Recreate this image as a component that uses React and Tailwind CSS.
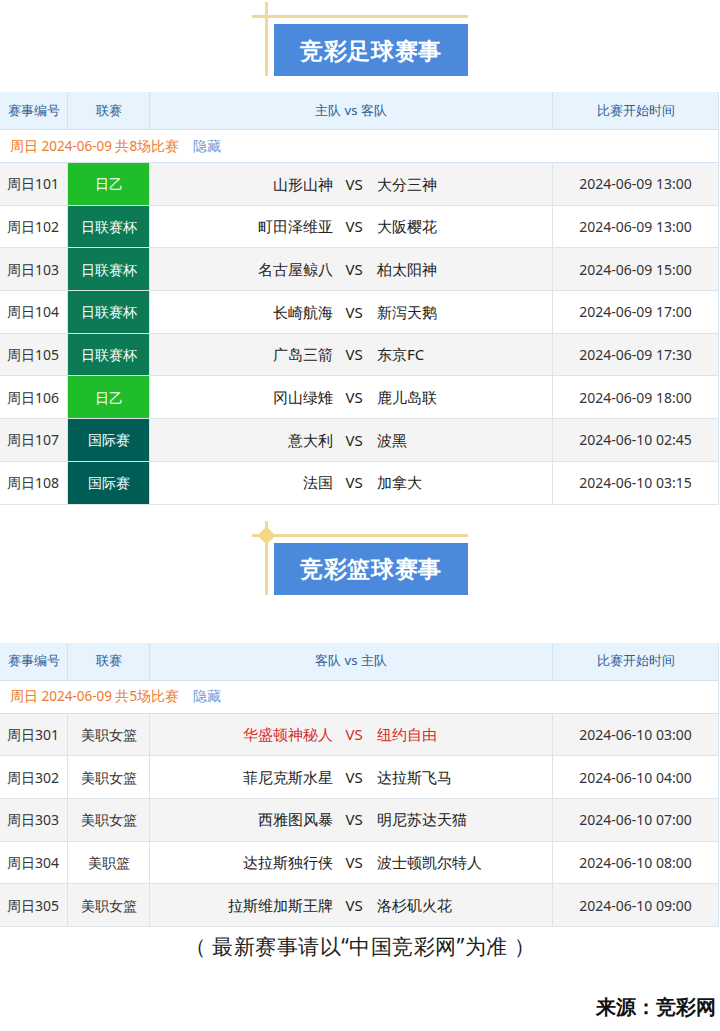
const football = [
  ['周日101', '日乙', 'bg-[#20bd2a]', '山形山神', '大分三神', '2024-06-09 13:00'],
  ['周日102', '日联赛杯', 'bg-[#0b7a55]', '町田泽维亚', '大阪樱花', '2024-06-09 13:00'],
  ['周日103', '日联赛杯', 'bg-[#0b7a55]', '名古屋鲸八', '柏太阳神', '2024-06-09 15:00'],
  ['周日104', '日联赛杯', 'bg-[#0b7a55]', '长崎航海', '新泻天鹅', '2024-06-09 17:00'],
  ['周日105', '日联赛杯', 'bg-[#0b7a55]', '广岛三箭', '东京FC', '2024-06-09 17:30'],
  ['周日106', '日乙', 'bg-[#20bd2a]', '冈山绿雉', '鹿儿岛联', '2024-06-09 18:00'],
  ['周日107', '国际赛', 'bg-[#005d55]', '意大利', '波黑', '2024-06-10 02:45'],
  ['周日108', '国际赛', 'bg-[#005d55]', '法国', '加拿大', '2024-06-10 03:15'],
];

const basketball = [
  ['周日301', '美职女篮', '', '华盛顿神秘人', '纽约自由', '2024-06-10 03:00', true],
  ['周日302', '美职女篮', '', '菲尼克斯水星', '达拉斯飞马', '2024-06-10 04:00'],
  ['周日303', '美职女篮', '', '西雅图风暴', '明尼苏达天猫', '2024-06-10 07:00'],
  ['周日304', '美职篮', '', '达拉斯独行侠', '波士顿凯尔特人', '2024-06-10 08:00'],
  ['周日305', '美职女篮', '', '拉斯维加斯王牌', '洛杉矶火花', '2024-06-10 09:00'],
];

const cols = 'grid grid-cols-[68px_82px_403px_165px]';

function Title({ text, dot }) {
  return (
    <div className="relative h-[76px] w-[216px] ml-[252px]">
      <div className="absolute left-0 right-0 top-[15px] h-[3px] bg-[#f0d898]" />
      <div className="absolute left-[13px] top-[2px] bottom-0 w-[3px] bg-[#f0d898]" />
      {dot && <div className="absolute left-[8px] top-[10px] w-[13px] h-[13px] rotate-45 rounded-[3px] bg-[#f5d68a]" />}
      <div className="absolute left-[22px] right-0 top-[24px] bottom-0 bg-[#4a89dc] flex items-center justify-center text-white text-[23px] font-bold tracking-wide">
        {text}
      </div>
    </div>
  );
}

function Table({ title, rows, count }) {
  return (
    <div className="w-[719px] border-r border-[#d8e4ee]">
      <div className={`${cols} h-[38px] bg-[#e8f4fd] text-[13px] text-[#2d5d93] border-b border-[#d3e2ee]`}>
        <div className="flex items-center justify-center border-r border-[#d3e2ee]">赛事编号</div>
        <div className="flex items-center justify-center border-r border-[#d3e2ee]">联赛</div>
        <div className="flex items-center justify-center border-r border-[#d3e2ee]">{title}</div>
        <div className="flex items-center justify-center">比赛开始时间</div>
      </div>
      <div className="h-[33px] flex items-center px-[10px] text-[13.5px] border-b border-[#d3e2ee]">
        <span className="text-[#f07a2c]">周日 2024-06-09 共{count}场比赛</span>
        <span className="ml-[14px] text-[#6d9ad6]">隐藏</span>
      </div>
      {rows.map((r, i) => (
        <div key={r[0]} className={`${cols} h-[42.7px] text-[14px] text-[#333] border-b border-[#dde3e8] ${i % 2 === 0 ? 'bg-[#f4f4f4]' : 'bg-white'}`}>
          <div className="flex items-center pl-[7px] border-r border-[#dde3e8]">{r[0]}</div>
          <div className={`flex items-center justify-center border-r border-[#dde3e8] ${r[2] ? r[2] + ' text-white' : ''}`}>{r[1]}</div>
          <div className={`flex items-center border-r border-[#dde3e8] text-[15px] ${r[6] ? 'text-[#d62b2b]' : 'text-[#222]'}`}>
            <span className="w-[183px] text-right">{r[3]}</span>
            <span className="w-[42px] text-center">VS</span>
            <span className="pl-[2px]">{r[4]}</span>
          </div>
          <div className="flex items-center justify-center">{r[5]}</div>
        </div>
      ))}
    </div>
  );
}

export default function App() {
  return (
    <div className="w-[720px] h-[1031px] bg-white font-['Noto_Sans_CJK_SC',sans-serif] overflow-hidden">
      <Title text="竞彩足球赛事" />
      <div className="h-[16px]" />
      <Table title="主队 vs 客队" rows={football} count={8} />
      <div className="h-[14px]" />
      <Title text="竞彩篮球赛事" dot />
      <div className="h-[48px]" />
      <Table title="客队 vs 主队" rows={basketball} count={5} />
      <div className="text-center text-[21px] text-[#222] mt-[4px] tracking-wide">（ 最新赛事请以“中国竞彩网”为准 ）</div>
      <div className="text-right pr-[4px] mt-[30px] text-[20px] font-bold text-[#111]">来源：竞彩网</div>
    </div>
  );
}
